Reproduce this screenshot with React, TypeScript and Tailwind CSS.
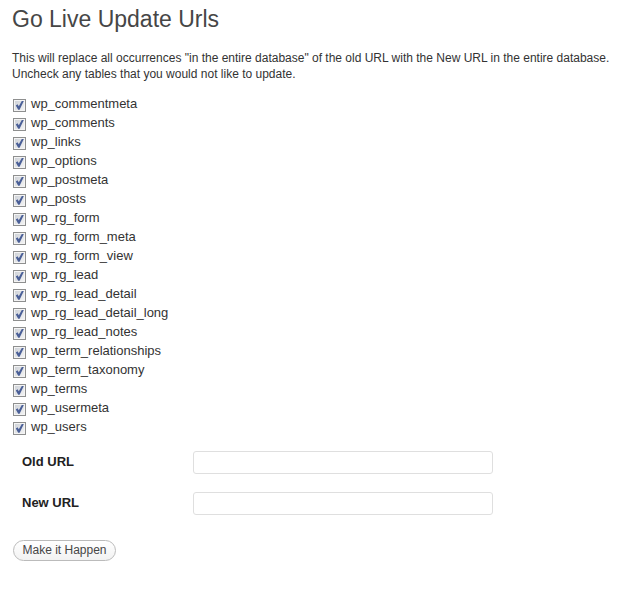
const tables: string[] = [
  'wp_commentmeta',
  'wp_comments',
  'wp_links',
  'wp_options',
  'wp_postmeta',
  'wp_posts',
  'wp_rg_form',
  'wp_rg_form_meta',
  'wp_rg_form_view',
  'wp_rg_lead',
  'wp_rg_lead_detail',
  'wp_rg_lead_detail_long',
  'wp_rg_lead_notes',
  'wp_term_relationships',
  'wp_term_taxonomy',
  'wp_terms',
  'wp_usermeta',
  'wp_users',
];

function TableOption({ name }: { name: string }) {
  return (
    <li className="flex h-[19px] items-start gap-[5px]">
      <span className="mt-[5px] grid size-[13px] shrink-0">
        <input
          type="checkbox"
          id={name}
          name={name}
          defaultChecked
          className="peer col-start-1 row-start-1 m-0 size-[13px] appearance-none border border-[#8e8f8f] bg-linear-to-br from-[#cbcfd5] to-[#f6f6f6] shadow-[inset_0_0_0_1px_#f4f4f4]"
        />
        <svg
          viewBox="0 0 13 13"
          aria-hidden="true"
          className="pointer-events-none invisible col-start-1 row-start-1 size-[13px] peer-checked:visible"
        >
          <path d="M2.8 6.4 4.6 5.2 5.8 7.2 8.8 2 10.8 2 6.6 10.8 5.2 10.8Z" fill="#4a5f97" />
        </svg>
      </span>
      <label htmlFor={name} className="leading-[19px]">
        {name}
      </label>
    </li>
  );
}

function UrlField({ id, label }: { id: string; label: string }) {
  return (
    <div className="flex items-start">
      <label htmlFor={id} className="w-[171px] shrink-0 font-bold leading-[22px] text-[#222222]">
        {label}
      </label>
      <input
        type="text"
        id={id}
        name={id}
        className="h-[23px] w-full max-w-[300px] rounded-[3px] border border-[#dfdfdf] bg-white px-1 text-xs"
      />
    </div>
  );
}

export default function App() {
  return (
    <main className="min-h-screen bg-white pt-1 pr-3 pb-12 pl-3 font-['Liberation_Sans',Arial,sans-serif] text-[13px] text-[#333333]">
      <h1 className="text-[23px] leading-[30px] text-[#464646]">Go Live Update Urls</h1>
      <p className="mt-4 text-xs leading-4">
        This will replace all occurrences "in the entire database" of the old URL with the New URL in the entire
        database.
        <br />
        Uncheck any tables that you would not like to update.
      </p>
      <form onSubmit={(event) => event.preventDefault()}>
        <ul className="mt-3 pl-px">
          {tables.map((name) => (
            <TableOption key={name} name={name} />
          ))}
        </ul>
        <div className="mt-[15px] flex flex-col gap-[18px] pl-[10px]">
          <UrlField id="oldurl" label="Old URL" />
          <UrlField id="newurl" label="New URL" />
        </div>
        <button
          type="submit"
          className="mt-[25px] ml-px h-[21px] min-w-[103px] rounded-full border border-[#bbbbbb] bg-linear-to-b from-white to-[#f2f2f2] px-2 text-xs leading-[19px] text-[#464646]"
        >
          Make it Happen
        </button>
      </form>
    </main>
  );
}
